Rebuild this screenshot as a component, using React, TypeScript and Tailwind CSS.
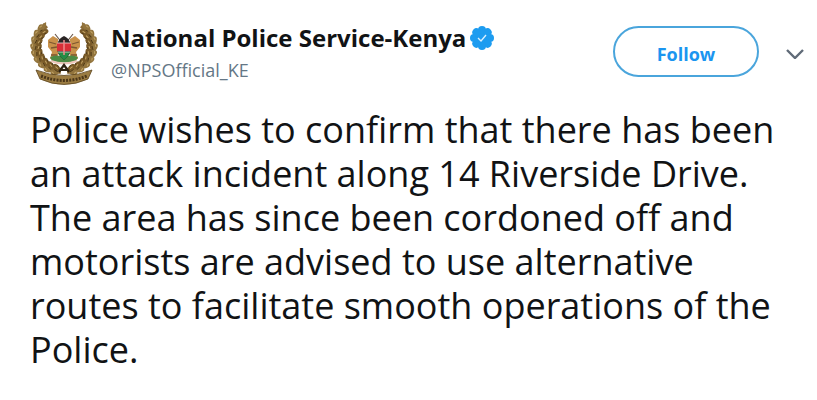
import React from 'react';

const lines = [
  'Police wishes to confirm that there has been',
  'an attack incident along 14 Riverside Drive.',
  'The area has since been cordoned off and',
  'motorists are advised to use alternative',
  'routes to facilitate smooth operations of the',
  'Police.',
];

// Angles, in degrees from straight down, at which the wreath's leaves sit.
const leafAngles = [20, 34, 48, 62, 76, 90, 104, 118, 132];

function WreathSide() {
  return (
    <g>
      <path d="M31 49C17 47 7 40 6 27C6 17 9 9 16 3" fill="none" stroke="#8a6a35" strokeWidth="6" />
      {leafAngles.map((angle) => {
        const rad = (angle * Math.PI) / 180;
        const x = 34 - 28 * Math.sin(rad);
        const y = 24 + 25 * Math.cos(rad);
        return (
          <g key={angle} transform={`translate(${x} ${y}) rotate(${angle - 90})`}>
            <ellipse cx="-3" cy="0" rx="2.6" ry="4.2" fill="#92743d" transform="rotate(-24)" />
            <ellipse cx="3" cy="0" rx="2.6" ry="4.2" fill="#795a28" transform="rotate(24)" />
            <path d="M-4 1L-3 -2M2 3L3 0" stroke="#c3a566" strokeWidth="1" />
            <path d="M-1 4L0 0M4 3L5 1" stroke="#4b3716" strokeWidth="0.9" />
          </g>
        );
      })}
      <path d="M11 7Q12 2 16 0Q17 4 13 8Z" fill="#92743d" />
    </g>
  );
}

function PoliceCrest() {
  return (
    <svg viewBox="0 0 68 64" className="h-16 w-[68px] shrink-0" role="img" aria-label="National Police Service crest">
      <WreathSide />
      <g transform="translate(68 0) scale(-1 1)">
        <WreathSide />
      </g>
      <path d="M25 12L43 35M43 12L25 35" stroke="#6d5a4d" strokeWidth="1.2" />
      <path d="M18 18L23 14L28 17L28 24L29 30L27 37H20L22 30L18 25Z" fill="#c9924b" />
      <path d="M50 18L45 14L40 17L40 24L39 30L41 37H48L46 30L50 25Z" fill="#c9924b" />
      <path d="M19 20L26 22M21 26L27 25M21 33H27M49 20L42 22M47 26L41 25M47 33H41" stroke="#7d5730" strokeWidth="1.3" />
      <path d="M20 35Q27 32 34 35Q41 32 48 35L46 39Q34 42 22 39Z" fill="#4d8b45" />
      <path d="M34 14C39 16 41 21 41 25C41 31 38 35 34 38C30 35 27 31 27 25C27 21 29 16 34 14Z" fill="#2b2525" />
      <path d="M27 21H41V29H27Z" fill="#d82f38" />
      <path d="M28 30H40Q38 35 34 38Q30 35 28 30Z" fill="#258c45" />
      <path d="M27 21H41M28 30H40" stroke="#f0dfdc" strokeWidth="0.8" />
      <path d="M34 18V33" stroke="#ef8c8c" strokeWidth="1.5" />
      <path d="M21 39Q34 44 47 39" fill="none" stroke="#edc5b9" strokeWidth="2" />
      <path d="M29 50L34 43L39 50M31 48H37" fill="none" stroke="#2f2414" strokeWidth="2.2" />
      <path d="M6 48Q34 59 62 48L58 57Q34 68 10 57Z" fill="#9b7c42" stroke="#5b421c" strokeWidth="0.8" />
      <path d="M11 54Q34 63 57 54" fill="none" stroke="#4c3719" strokeWidth="3" strokeDasharray="2 1.2" />
    </svg>
  );
}

function VerifiedBadge() {
  return (
    <svg viewBox="0 0 24 24" className="size-6 shrink-0" role="img" aria-label="Verified account">
      <g fill="#1d9cf0">
        <circle cx="12" cy="12" r="9" />
        {[0, 45, 90, 135, 180, 225, 270, 315].map((angle) => (
          <circle key={angle} cx="12" cy="4" r="4" transform={`rotate(${angle} 12 12)`} />
        ))}
      </g>
      <path d="M8 12L11 15L16 9" fill="none" stroke="#d9f0ff" strokeWidth="1.4" />
    </svg>
  );
}

export default function App() {
  return (
    <article className="bg-white pt-[22px] pr-1.5 pb-7 pl-[30px] font-['Open_Sans','Noto_Sans',sans-serif] text-[#111315]">
      <header className="flex items-start">
        <PoliceCrest />
        <div className="ml-[13px] min-w-0 flex-1">
          <div className="flex items-center gap-1">
            <h1 className="text-[24px] leading-8 font-bold whitespace-nowrap">National Police Service-Kenya</h1>
            <VerifiedBadge />
          </div>
          <a href="#profile" className="block text-[18px] leading-8 text-[#657786]">@NPSOfficial_KE</a>
        </div>
        <div className="mt-1 flex items-center">
          <button type="button" className="h-[51px] w-[146px] rounded-full border-2 border-[#4aa5dc] pt-1 text-[18px] leading-6 font-bold text-[#1b95f0]">
            Follow
          </button>
          <button type="button" aria-label="More options" className="ml-5 flex size-8 items-center justify-center pt-1">
            <svg viewBox="0 0 18 10" className="h-[10px] w-[18px]" fill="none" stroke="#606b78" strokeWidth="2.4">
              <path d="M1 1L9 9L17 1" />
            </svg>
          </button>
        </div>
      </header>
      <p className="mt-[22px] text-[36px] leading-[44px]">
        {lines.map((line) => (
          <span key={line} className="block whitespace-nowrap">{line} </span>
        ))}
      </p>
    </article>
  );
}
